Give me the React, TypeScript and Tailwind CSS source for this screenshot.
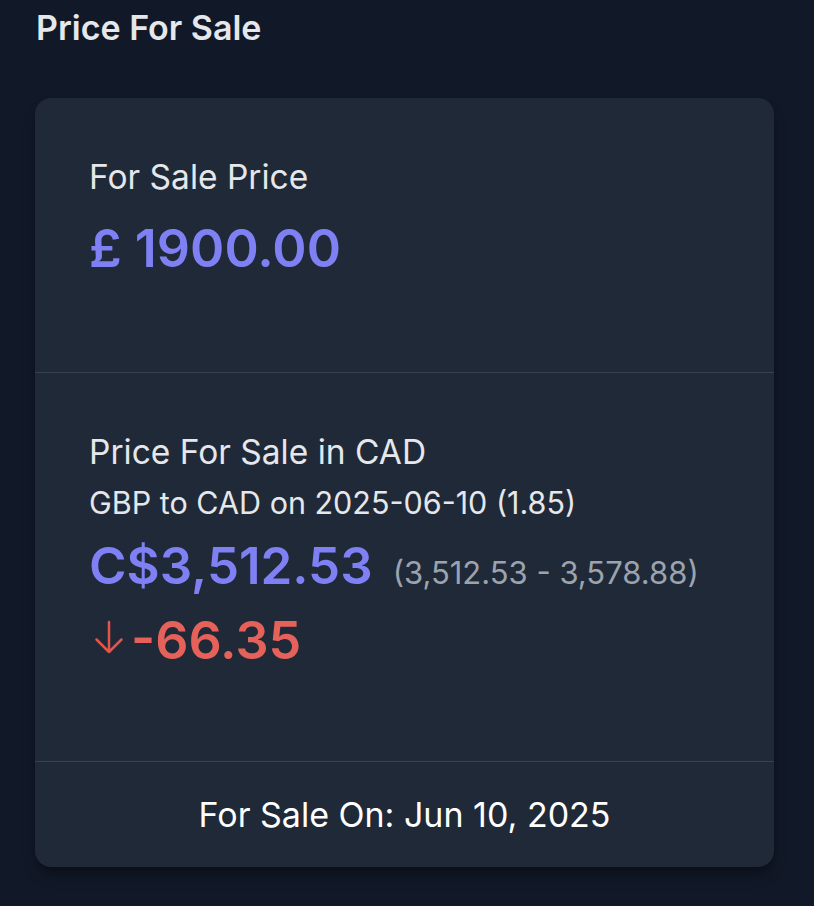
import React from 'react'

const font = { fontFamily: 'Inter, "Noto Sans", sans-serif' }

function ArrowDown() {
  return (
    <svg viewBox="0 0 24 24" fill="none" stroke="currentColor" strokeWidth={1.5} className="w-[40px] h-[40px] mt-[6px] shrink-0 text-[#e5534b]">
      <path strokeLinecap="round" strokeLinejoin="round" d="M19.5 13.5 12 21m0 0-7.5-7.5M12 21V3" />
    </svg>
  )
}

export default function App() {
  return (
    <div className="min-h-screen bg-[#111827] px-[35px] pt-[6px]" style={font}>
      <h1 className="text-[34px] leading-[44px] font-semibold text-[#e5e7eb] pl-[1px]">Price For Sale</h1>

      <div className="mt-[48px] w-[739px] rounded-[16px] bg-[#1f2937] shadow-lg shadow-black/30 overflow-hidden">
        {/* gbp price */}
        <section className="h-[275px] px-[54px] pt-[59px] border-b border-[#374151]">
          <p className="text-[33.5px] leading-[40px] text-[#e5e7eb]">For Sale Price</p>
          <p className="mt-[22px] text-[52px] leading-[60px] font-semibold text-[#7f80f3]">£ 1900.00</p>
        </section>

        {/* cad price */}
        <section className="h-[389px] px-[54px] pt-[59px] border-b border-[#374151]">
          <p className="text-[33.5px] leading-[40px] text-[#e5e7eb]">Price For Sale in CAD</p>
          <p className="mt-[13px] text-[30.5px] leading-[36px] text-[#e5e7eb]">GBP to CAD on 2025-06-10 (1.85)</p>
          <div className="mt-[15px] flex items-baseline gap-[20px]">
            <span className="text-[51px] leading-[60px] font-semibold text-[#7f80f3]">C$3,512.53</span>
            <span className="text-[31px] leading-[36px] text-[#9ca3af]">(3,512.53 - 3,578.88)</span>
          </div>
          <div className="mt-[15px] flex items-start">
            <ArrowDown />
            <span className="ml-[2px] text-[52px] leading-[60px] font-semibold text-[#e5625a]">-66.35</span>
          </div>
        </section>

        {/* date */}
        <div className="h-[105px] flex items-center justify-center">
          <p className="text-[34px] leading-[40px] text-white">For Sale On: Jun 10, 2025</p>
        </div>
      </div>
    </div>
  )
}
